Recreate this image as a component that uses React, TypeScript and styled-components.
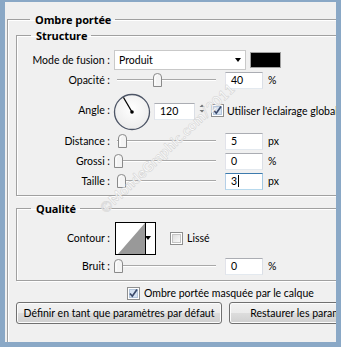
import React from 'react';
import styled, { createGlobalStyle } from 'styled-components';

const GlobalStyle = createGlobalStyle`
  html, body {
    margin: 0;
    padding: 0;
    background: #8aa8c6;
  }
  body {
    font-family: Lato, 'Liberation Sans', sans-serif;
    font-size: 10.5px;
    color: #000;
  }
`;

const CheckBox = ({ checked }: { checked?: boolean }) => (
  <St.CheckSvg width="13" height="13" viewBox="0 0 13 13">
    <defs>
      <linearGradient id="cbg" x1="0" y1="0" x2="1" y2="1">
        <stop offset="0" stopColor="#dcdcdc" />
        <stop offset="1" stopColor="#fbfbfb" />
      </linearGradient>
    </defs>
    <rect x="0.5" y="0.5" width="12" height="12" fill="#fff" stroke="#8e8f8f" />
    <rect x="2.5" y="2.5" width="8" height="8" fill={checked ? '#d6e3f2' : 'url(#cbg)'} stroke={checked ? '#b4c6dc' : '#c4c4c4'} />
    {checked && (
      <path d="M3 6.5 L5.3 9.2 L10 2.6" fill="none" stroke="#3b4a6b" strokeWidth="1.7" />
    )}
  </St.CheckSvg>
);

const Slider = ({ pos }: { pos: number }) => (
  <St.Slider>
    <St.Track />
    <St.Thumb width="9" height="14" viewBox="0 0 9 14" style={{ left: pos }}>
      <path d="M0.5 13.5 V4 Q0.5 0.5 4.5 0.5 Q8.5 0.5 8.5 4 V13.5 Z" fill="#f4f4f4" stroke="#8a8a8a" />
      <path d="M2 12 V4.5 Q2 2 4.5 2" fill="none" stroke="#fff" />
    </St.Thumb>
  </St.Slider>
);

const NumField = ({ value, unit, focused }: { value: string; unit: string; focused?: boolean }) => (
  <>
    <St.Input $focused={focused}>
      {value}
      {focused && <St.Caret />}
    </St.Input>
    <St.Unit>{unit}</St.Unit>
  </>
);

const App = () => {
  return (
    <>
      <GlobalStyle />
      <St.Frame>
        <St.Dialog>
          <St.Group $outer>
            <St.Legend>Ombre portée</St.Legend>

            <St.Group>
              <St.Legend>Structure</St.Legend>
              <St.Rows $top={6} $bottom={5}>
                <St.Row $h={22}>
                  <St.Label>Mode de fusion :</St.Label>
                  <St.Controls>
                    <St.Select>
                      Produit
                      <St.Arrow />
                    </St.Select>
                    <St.Swatch />
                  </St.Controls>
                </St.Row>
                <St.Row $h={18}>
                  <St.Label>Opacité :</St.Label>
                  <St.Controls>
                    <Slider pos={39} />
                    <NumField value="40" unit="%" />
                  </St.Controls>
                </St.Row>
                <St.Row $h={43}>
                  <St.Label>Angle :</St.Label>
                  <St.Controls>
                    <St.Dial width="38" height="38" viewBox="0 0 38 38">
                      <defs>
                        <radialGradient id="dial" cx="0.5" cy="0.4" r="0.6">
                          <stop offset="0" stopColor="#ffffff" />
                          <stop offset="1" stopColor="#ececec" />
                        </radialGradient>
                      </defs>
                      <circle cx="19" cy="19" r="17.5" fill="url(#dial)" stroke="#4d5566" strokeWidth="1.3" />
                      <line x1="19" y1="19" x2="10.5" y2="4.5" stroke="#000" strokeWidth="1.3" />
                      <circle cx="19" cy="19" r="1.8" fill="#000" />
                    </St.Dial>
                    <St.AngleInput>120</St.AngleInput>
                    <St.Spin width="6" height="9" viewBox="0 0 6 9">
                      <path d="M3 0.5 L5.5 3 H0.5 Z M3 8.5 L5.5 6 H0.5 Z" fill="#777" />
                    </St.Spin>
                    <St.CheckLabel $gap={3} $ml={6}>
                      <CheckBox checked />
                      Utiliser l'éclairage global
                    </St.CheckLabel>
                  </St.Controls>
                </St.Row>
                <St.Row $h={18} $mt={0}>
                  <St.Label>Distance :</St.Label>
                  <St.Controls>
                    <Slider pos={4} />
                    <NumField value="5" unit="px" />
                  </St.Controls>
                </St.Row>
                <St.Row $h={18} $mt={2}>
                  <St.Label>Grossi :</St.Label>
                  <St.Controls>
                    <Slider pos={0} />
                    <NumField value="0" unit="%" />
                  </St.Controls>
                </St.Row>
                <St.Row $h={18} $mt={2}>
                  <St.Label>Taille :</St.Label>
                  <St.Controls>
                    <Slider pos={3} />
                    <NumField value="3" unit="px" focused />
                  </St.Controls>
                </St.Row>
              </St.Rows>
            </St.Group>

            <St.Group $mt={5}>
              <St.Legend>Qualité</St.Legend>
              <St.Rows $top={5} $bottom={5}>
                <St.Row $h={34}>
                  <St.Label>Contour :</St.Label>
                  <St.Controls>
                    <St.Contour>
                      <svg width="29" height="31" viewBox="0 0 29 31">
                        <path d="M2 31 L29 0 V31 Z" fill="#999" />
                      </svg>
                      <St.ContourDrop>
                        <St.Arrow />
                      </St.ContourDrop>
                    </St.Contour>
                    <St.CheckLabel $gap={4} $ml={14}>
                      <CheckBox />
                      Lissé
                    </St.CheckLabel>
                  </St.Controls>
                </St.Row>
                <St.Row $h={18} $mt={2}>
                  <St.Label>Bruit :</St.Label>
                  <St.Controls>
                    <Slider pos={0} />
                    <NumField value="0" unit="%" />
                  </St.Controls>
                </St.Row>
              </St.Rows>
            </St.Group>

            <St.MaskRow>
              <St.CheckLabel $gap={4}>
                <CheckBox checked />
                Ombre portée masquée par le calque
              </St.CheckLabel>
            </St.MaskRow>

            <St.Buttons>
              <St.Button>Définir en tant que paramètres par défaut</St.Button>
              <St.Button>Restaurer les paramètres par défaut</St.Button>
            </St.Buttons>
          </St.Group>

          <St.Watermark>©MondeGraphic.com/2011</St.Watermark>
        </St.Dialog>
      </St.Frame>
    </>
  );
};

export default App;

const St = {
  Frame: styled.div`
    width: 341px;
    height: 347px;
    box-sizing: border-box;
    border-style: solid;
    border-color: #8aa8c6;
    border-width: 2px 5px 5px 5px;
    background: #8aa8c6;
  `,
  Dialog: styled.div`
    position: relative;
    height: 100%;
    overflow: hidden;
    background: #f0f0f0;
    padding: 10px 0 0 2px;
    box-sizing: border-box;
  `,
  Group: styled.fieldset<{ $outer?: boolean; $mt?: number }>`
    margin: ${(p) => p.$mt ?? 0}px 0 0 0;
    padding: ${(p) => (p.$outer ? '1px 0 40px 8px' : '0')};
    width: ${(p) => (p.$outer ? 420 : 400)}px;
    min-width: 0;
    box-sizing: border-box;
    border: 1px solid #a0a0a0;
    box-shadow: inset 1px 1px 0 #fff, 1px 1px 0 #fff;
  `,
  Legend: styled.legend`
    margin-left: 14px;
    padding: 0 4px 0 5px;
    font-family: 'Open Sans', sans-serif;
    font-weight: bold;
    font-size: 11px;
    letter-spacing: -0.1px;
    line-height: 15px;
    color: #000;
  `,
  Rows: styled.div<{ $top: number; $bottom: number }>`
    display: flex;
    flex-direction: column;
    padding: ${(p) => p.$top}px 0 ${(p) => p.$bottom}px 0;
  `,
  Row: styled.div<{ $h: number; $mt?: number }>`
    display: grid;
    grid-template-columns: 93px auto;
    column-gap: 4px;
    align-items: center;
    height: ${(p) => p.$h}px;
    margin-top: ${(p) => p.$mt ?? 0}px;
  `,
  Label: styled.div`
    text-align: right;
    white-space: nowrap;
    line-height: 15px;
  `,
  Controls: styled.div`
    display: flex;
    align-items: center;
    white-space: nowrap;
  `,
  Select: styled.div`
    position: relative;
    width: 132px;
    height: 20px;
    box-sizing: border-box;
    background: #fff;
    border: 1px solid #c9c9c9;
    padding-left: 4px;
    line-height: 18px;
  `,
  Arrow: styled.span`
    position: absolute;
    right: 4px;
    top: 50%;
    margin-top: -2px;
    border-left: 3.5px solid transparent;
    border-right: 3.5px solid transparent;
    border-top: 4px solid #000;
  `,
  Swatch: styled.div`
    width: 31px;
    height: 16px;
    margin-left: 4px;
    box-sizing: border-box;
    background: #000;
    border: 1px solid #a0a0a0;
  `,
  Slider: styled.div`
    position: relative;
    width: 104px;
    height: 16px;
    flex: none;
  `,
  Track: styled.div`
    position: absolute;
    left: 3px;
    right: 2px;
    top: 7px;
    height: 1px;
    background: #a8a8a8;
    box-shadow: 0 1px 0 #fff;
  `,
  Thumb: styled.svg`
    position: absolute;
    top: 1px;
    display: block;
  `,
  Input: styled.div<{ $focused?: boolean }>`
    display: flex;
    align-items: center;
    width: 38px;
    height: 17px;
    margin-left: 7px;
    box-sizing: border-box;
    padding-left: 5px;
    background: #fff;
    border: 1px solid;
    border-color: ${(p) => (p.$focused ? '#3d7bad #a4c9e3 #b7d9ed #b5cfe7' : '#abadb3 #dbdfe6 #e3e9ef #e2e3ea')};
    line-height: 15px;
  `,
  Caret: styled.span`
    width: 1px;
    height: 12px;
    margin-left: 1px;
    background: #000;
  `,
  Unit: styled.span`
    margin-left: 5px;
  `,
  Dial: styled.svg`
    display: block;
    margin: 3px 0 0 -1px;
  `,
  AngleInput: styled.div`
    width: 41px;
    height: 17px;
    margin: 2px 0 0 3px;
    box-sizing: border-box;
    padding-left: 5px;
    background: #fff;
    border: 1px solid;
    border-color: #abadb3 #dbdfe6 #e3e9ef #e2e3ea;
    line-height: 15px;
  `,
  Spin: styled.svg`
    display: block;
    margin: 0 0 4px 4px;
  `,
  CheckLabel: styled.label<{ $gap: number; $ml?: number }>`
    display: flex;
    align-items: center;
    gap: ${(p) => p.$gap}px;
    margin-left: ${(p) => p.$ml ?? 8}px;
    white-space: nowrap;
  `,
  CheckSvg: styled.svg`
    display: block;
    flex: none;
  `,
  Contour: styled.div`
    display: flex;
    width: 41px;
    height: 33px;
    margin-left: 1px;
    box-sizing: border-box;
    background: #fff;
    border: 1px solid #000;
    svg {
      display: block;
    }
  `,
  ContourDrop: styled.div`
    position: relative;
    width: 10px;
    box-sizing: border-box;
    border-left: 1px solid #000;
  `,
  MaskRow: styled.div`
    display: flex;
    height: 16px;
    margin-top: 4px;
    padding-left: 103px;
  `,
  Buttons: styled.div`
    display: flex;
    gap: 7px;
    margin-top: 1px;
  `,
  Button: styled.button`
    flex: none;
    width: 206px;
    height: 22px;
    padding: 0;
    font-family: inherit;
    font-size: 10.5px;
    white-space: nowrap;
    color: #000;
    border: 1px solid #707070;
    border-radius: 3px;
    background: linear-gradient(#f2f2f2 0%, #ebebeb 49%, #dddddd 50%, #cfcfcf 100%);
    box-shadow: inset 0 0 0 1px #fcfcfc;
  `,
  Watermark: styled.div`
    position: absolute;
    left: 162px;
    top: 146px;
    transform: translate(-50%, -50%) rotate(-43.6deg);
    font-size: 14px;
    font-weight: bold;
    letter-spacing: 0.3px;
    color: rgba(255, 255, 255, 0.85);
    -webkit-text-stroke: 0.5px #cfcfcf;
    white-space: nowrap;
    pointer-events: none;
  `,
};
